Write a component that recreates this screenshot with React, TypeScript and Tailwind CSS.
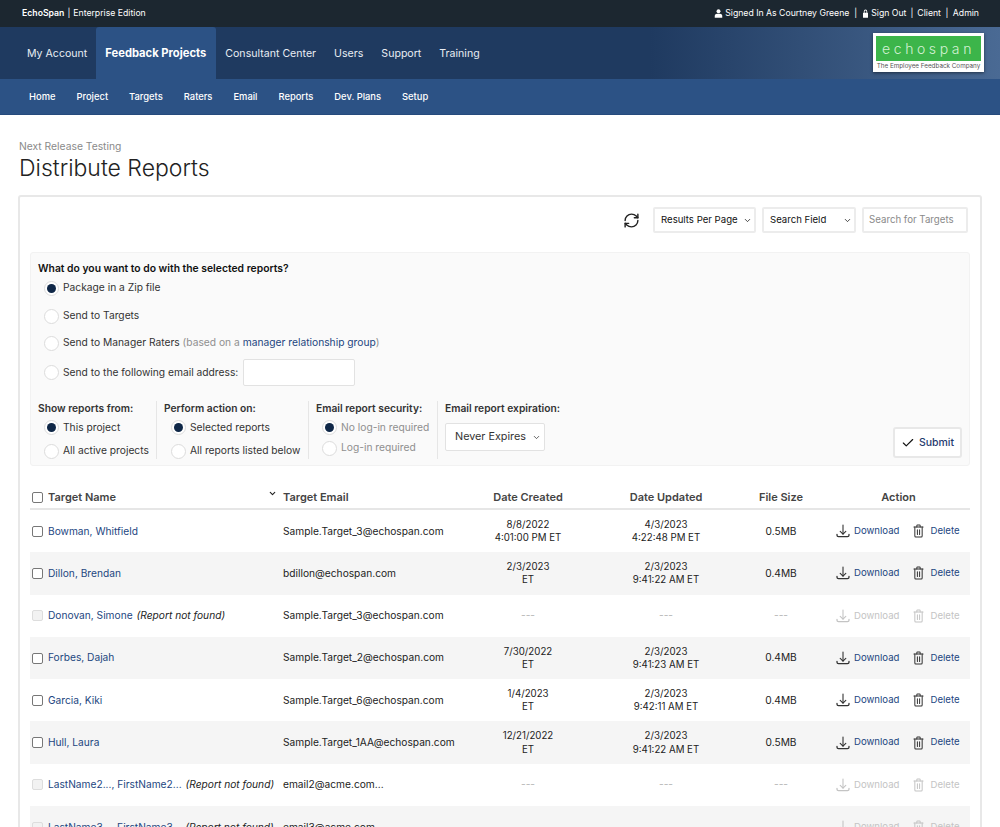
import { Check, ChevronDown, RefreshCw } from 'lucide-react'

const mainNav = ['My Account', 'Feedback Projects', 'Consultant Center', 'Users', 'Support', 'Training']
const subNav = ['Home', 'Project', 'Targets', 'Raters', 'Email', 'Reports', 'Dev. Plans', 'Setup']
const cols = 'grid-cols-[253px_176px_138px_138px_92px_143px]'

type Row = {
  name: string
  email: string
  created?: [string, string]
  updated?: [string, string]
  size?: string
}

const rows: Row[] = [
  { name: 'Bowman, Whitfield', email: 'Sample.Target_3@echospan.com', created: ['8/8/2022', '4:01:00 PM ET'], updated: ['4/3/2023', '4:22:48 PM ET'], size: '0.5MB' },
  { name: 'Dillon, Brendan', email: 'bdillon@echospan.com', created: ['2/3/2023', 'ET'], updated: ['2/3/2023', '9:41:22 AM ET'], size: '0.4MB' },
  { name: 'Donovan, Simone', email: 'Sample.Target_3@echospan.com' },
  { name: 'Forbes, Dajah', email: 'Sample.Target_2@echospan.com', created: ['7/30/2022', 'ET'], updated: ['2/3/2023', '9:41:23 AM ET'], size: '0.4MB' },
  { name: 'Garcia, Kiki', email: 'Sample.Target_6@echospan.com', created: ['1/4/2023', 'ET'], updated: ['2/3/2023', '9:42:11 AM ET'], size: '0.4MB' },
  { name: 'Hull, Laura', email: 'Sample.Target_1AA@echospan.com', created: ['12/21/2022', 'ET'], updated: ['2/3/2023', '9:41:22 AM ET'], size: '0.5MB' },
  { name: 'LastName2..., FirstName2...', email: 'email2@acme.com...' },
  { name: 'LastName3..., FirstName3...', email: 'email3@acme.com...' },
]

function UserIcon() {
  return (
    <svg viewBox="0 0 12 12" className="mr-[2px] h-[9px] w-[9px]" fill="currentColor">
      <circle cx="6" cy="3" r="2.6" />
      <path d="M1 11.500V9.200C1 7.400 2.600 6.300 4 6.300h4c1.400 0 3 1.100 3 2.900v2.300z" />
    </svg>
  )
}

function LockIcon() {
  return (
    <svg viewBox="0 0 12 12" className="mr-[2px] h-[9px] w-[7px]" fill="currentColor" preserveAspectRatio="none">
      <path d="M3 5V3.600a3 3 0 0 1 6 0V5h.5a.8.8 0 0 1 .8.8v5.200a.8.8 0 0 1-.8.8h-7a.8.8 0 0 1-.8-.8V5.800a.8.8 0 0 1 .8-.8zm1.400 0h3.200V3.600a1.600 1.600 0 0 0-3.200 0z" />
    </svg>
  )
}

function DownloadIcon({ className }: { className: string }) {
  return (
    <svg viewBox="0 0 14 14" className={`h-[14px] w-[14px] ${className}`} fill="none" stroke="currentColor" strokeWidth="1.100" strokeLinecap="round" strokeLinejoin="round">
      <path d="M7 1v9" />
      <path d="M4.200 7.400 7 10.200l2.800-2.800" />
      <path d="M1 10.500v.8c0 .9.700 1.400 1.500 1.400h9c.8 0 1.500-.5 1.500-1.400v-.8" strokeWidth="1.300" />
    </svg>
  )
}

function TrashIcon({ className }: { className: string }) {
  return (
    <svg viewBox="0 0 12 14" className={`h-[14px] w-[11px] ${className}`} fill="none" stroke="currentColor" strokeWidth="1.100" strokeLinecap="round" strokeLinejoin="round" preserveAspectRatio="none">
      <path d="M1 3h10" />
      <path d="M4.200 3V1.600c0-.4.300-.6.600-.6h2.400c.3 0 .6.200.6.600V3" />
      <path d="M2 3v9c0 .6.400 1 1 1h6c.6 0 1-.4 1-1V3" />
      <path d="M4.800 5.800v4.600M7.200 5.800v4.600" />
    </svg>
  )
}

function Radio({ on, muted, label }: { on?: boolean; muted?: boolean; label: React.ReactNode }) {
  return (
    <div className="flex items-center gap-1">
      <span className="flex h-[15px] w-[15px] items-center justify-center rounded-full border border-[#dcdcdc] bg-white">
        {on && <span className="h-[9px] w-[9px] rounded-full bg-[#0f2747]" />}
      </span>
      <span className={muted ? 'text-[#8f8f8f]' : 'text-[#333]'}>{label}</span>
    </div>
  )
}

function Box({ muted }: { muted?: boolean }) {
  return <span className={`box-content block h-[9px] w-[9px] rounded-[2px] border ${muted ? 'border-[#dddddd] bg-[#f2f2f2]' : 'border-[#777] bg-white'}`} />
}

function DateCell({ value }: { value?: [string, string] }) {
  if (!value) return <div className="text-center text-[#b5b5b5]">---</div>
  return (
    <div className="text-center text-[9.7px] leading-[13.5px] text-[#222]">
      {value[0]}
      <br />
      {value[1]}
    </div>
  )
}

function TableRow({ row, shaded }: { row: Row; shaded: boolean }) {
  const missing = !row.size
  const iconColor = missing ? 'text-[#c4c4c4]' : 'text-[#333]'
  return (
    <div className={`grid h-[42.3px] ${cols} items-center text-[10.2px] ${shaded ? 'bg-[#f5f5f5]' : 'bg-white'}`}>
      <div className="flex items-center pl-[2px]">
        <Box muted={missing} />
        <span className="ml-[5px] whitespace-nowrap text-[#23467f]">{row.name}</span>
        {missing && <span className="ml-1 whitespace-nowrap italic text-[#222]">(Report not found)</span>}
      </div>
      <div className="whitespace-nowrap text-[#222]">{row.email}</div>
      <DateCell value={row.created} />
      <DateCell value={row.updated} />
      <div className={`text-center ${missing ? 'text-[#b5b5b5]' : 'text-[#222]'}`}>{row.size ?? '---'}</div>
      <div className={`flex items-center pl-[9px] text-[9.6px] ${missing ? 'text-[#c4c4c4]' : 'text-[#23467f]'}`}>
        <DownloadIcon className={iconColor} />
        <span className="ml-1">Download</span>
        <TrashIcon className={`ml-[14px] ${iconColor}`} />
        <span className="ml-[6px]">Delete</span>
      </div>
    </div>
  )
}

export default function App() {
  return (
    <div className="h-[827px] overflow-hidden bg-white font-['Inter',sans-serif] text-[#222]">
      <div className="flex h-[27px] items-center justify-between bg-[#1c2730] pl-[22px] pr-[21px] text-[8.7px] text-white">
        <div>
          <span className="font-semibold">EchoSpan</span>
          <span className="mx-[3px]">|</span>
          Enterprise Edition
        </div>
        <div className="flex items-center">
          <UserIcon />
          Signed In As Courtney Greene
          <span className="mx-[5px]">|</span>
          <LockIcon />
          Sign Out
          <span className="mx-[4px]">|</span>
          Client
          <span className="mx-[4.500px]">|</span>
          Admin
        </div>
      </div>

      <div className="flex h-[52px] items-stretch justify-between bg-gradient-to-r from-[#1f3a60] from-65% to-[#4a6a94] pl-[18px] pr-4">
        <div className="flex items-stretch pt-px text-[10.6px] text-[#e8edf3]">
          {mainNav.map((item) => (
            <div
              key={item}
              className={
                item === 'Feedback Projects'
                  ? '-mt-px flex items-center rounded-t-[3px] bg-[#2c5285] pl-[9px] pr-[10px] pt-px text-[11.2px] font-bold text-white'
                  : 'flex items-center px-[9px]'
              }
            >
              {item}
            </div>
          ))}
        </div>
        <div className="mt-[6px] h-[39px] w-[111px] bg-white px-[3px] pt-[3px] shadow-[0_1px_3px_rgba(0,0,0,0.5)]">
          <div className="flex h-[25px] items-center justify-center bg-[#3cb54a] text-[14px] font-light tracking-[3.600px] text-[#d5f2d5]">echospan</div>
          <div className="whitespace-nowrap text-center text-[6.300px] leading-[10px] text-[#555]">The Employee Feedback Company</div>
        </div>
      </div>

      <div className="flex h-9 items-center gap-[21px] border-b border-[#264a7c] bg-[#2c5285] pl-[29px] pt-px text-[9.400px] font-medium text-white">
        {subNav.map((item) => (
          <span key={item}>{item}</span>
        ))}
      </div>

      <div className="px-[18px] pt-[25px]">
        <div className="pl-px text-[10.300px] leading-[13px] text-[#8a8a8a]">Next Release Testing</div>
        <h1 className="pl-px text-[23px] font-light leading-[30px] text-[#222]">Distribute Reports</h1>

        <div className="mt-3 rounded-[3px] border-2 border-[#e8e8e8] px-[10px]">
          <div className="flex h-[55px] items-start justify-end pr-[2px] pt-[10px]">
            <RefreshCw size={17} className="mr-[13px] mt-[5px] text-[#222]" />
            <div className="mr-[6px] flex h-[26px] w-[103px] items-center justify-between rounded-[2px] border-2 border-[#ececec] pl-[6px] pr-[2px] text-[9.600px] text-[#111]">
              Results Per Page
              <ChevronDown size={9} />
            </div>
            <div className="mr-[6px] flex h-[26px] w-[94px] items-center justify-between rounded-[2px] border-2 border-[#ececec] pl-[6px] pr-[2px] text-[9.600px] text-[#111]">
              Search Field
              <ChevronDown size={9} />
            </div>
            <div className="flex h-[26px] w-[106px] items-center rounded-[2px] border-2 border-[#ececec] pl-[5px] text-[9.700px] text-[#8a8a8a]">Search for Targets</div>
          </div>

          <div className="relative h-[214px] rounded-[3px] border border-[#f2f2f2] bg-[#fafafa] pl-[7px] pt-2 text-[10.250px]">
            <div className="text-[10.350px] font-semibold leading-[14px] text-[#111]">What do you want to do with the selected reports?</div>
            <div className="mt-[5px] flex flex-col pl-[6px]">
              <div className="flex h-[16px] items-center">
                <Radio on label="Package in a Zip file" />
              </div>
              <div className="mt-[12px] flex h-[16px] items-center">
                <Radio label="Send to Targets" />
              </div>
              <div className="mt-[11px] flex h-[16px] items-center">
                <Radio
                  label={
                    <>
                      Send to Manager Raters <span className="text-[#8f8f8f]">(based on a <span className="text-[#23467f]">manager relationship group</span>)</span>
                    </>
                  }
                />
              </div>
              <div className="mt-2 flex items-center">
                <Radio label="Send to the following email address:" />
                <span className="ml-[5px] h-[27px] w-[112px] rounded-[2px] border border-[#e2e2e2] bg-white" />
              </div>
            </div>

            <div className="mt-[15px] flex h-[58px]">
              <div className="w-[119px] border-r border-[#e6e6e6]">
                <div className="font-semibold leading-[14px] text-[#333]">Show reports from:</div>
                <div className="mt-[5px] flex flex-col gap-2 pl-[6px]">
                  <Radio on label="This project" />
                  <Radio label="All active projects" />
                </div>
              </div>
              <div className="w-[152px] border-r border-[#e6e6e6] pl-[7px]">
                <div className="font-semibold leading-[14px] text-[#333]">Perform action on:</div>
                <div className="mt-[5px] flex flex-col gap-2 pl-[7px]">
                  <Radio on label="Selected reports" />
                  <Radio label="All reports listed below" />
                </div>
              </div>
              <div className="w-[129px] border-r border-[#e6e6e6] pl-[7px]">
                <div className="font-semibold leading-[14px] text-[#333]">Email report security:</div>
                <div className="mt-[5px] flex flex-col gap-[5px] pl-[6px]">
                  <Radio on muted label="No log-in required" />
                  <Radio muted label="Log-in required" />
                </div>
              </div>
              <div className="pl-[7px]">
                <div className="font-semibold leading-[14px] text-[#333]">Email report expiration:</div>
                <div className="mt-2 flex h-[28px] w-[100px] items-center justify-between rounded-[2px] border border-[#e2e2e2] bg-white pl-[9px] pr-[3px] text-[10.800px] text-[#333]">
                  Never Expires
                  <ChevronDown size={9} />
                </div>
              </div>
            </div>

            <div className="absolute bottom-[7px] right-[7px] flex h-[31px] w-[69px] items-center justify-center gap-[4px] rounded-[3px] border-2 border-[#e8e8e8] bg-white text-[10.500px] font-medium text-[#1f3a6e]">
              <Check size={14} className="text-[#111]" />
              Submit
            </div>
          </div>

          <div className={`mt-[23px] grid h-[21px] ${cols} items-start border-b-2 border-[#e6e6e6] text-[11px] font-semibold text-[#444]`}>
            <div className="relative flex items-center pl-[2px]">
              <Box />
              <span className="ml-[5px]">Target Name</span>
              <ChevronDown size={9} strokeWidth={3} className="absolute right-[6px] top-0 text-[#222]" />
            </div>
            <div>Target Email</div>
            <div className="text-center">Date Created</div>
            <div className="text-center">Date Updated</div>
            <div className="text-center">File Size</div>
            <div className="text-center">Action</div>
          </div>

          {rows.map((row, i) => (
            <TableRow key={row.name} row={row} shaded={i % 2 === 1} />
          ))}
        </div>
      </div>
    </div>
  )
}
